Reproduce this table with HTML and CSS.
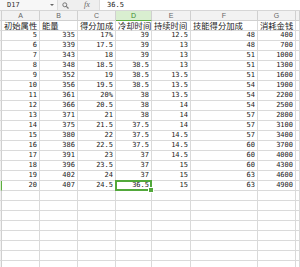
FILE: index.html
```html
<!DOCTYPE html>
<html>
<head>
<meta charset="utf-8">
<link rel="stylesheet" href="styles.css">
</head>
<body>
<div class="fbar">
  <div class="namebox"><span class="ref">D17</span><span class="caret"></span></div>
  <div class="tools">
    <svg class="mag" width="7" height="7" viewBox="0 0 7 7"><circle cx="2.8" cy="2.8" r="2" fill="none" stroke="#777" stroke-width="1"/><path d="M4.3 4.3 L6.5 6.5" stroke="#777" stroke-width="1.2"/></svg>
    <span class="fx">fx</span>
  </div>
  <div class="input">36.5</div>
</div>
<div class="sheet">
  <div class="rh ch"></div><div class="ch">A</div><div class="ch">B</div><div class="ch">C</div><div class="ch act">D</div><div class="ch">E</div><div class="ch">F</div><div class="ch">G</div><div class="ch"></div>
  <div class="rh"></div><div class="t">初始属性</div><div class="t">能量</div><div class="t">得分加成</div><div class="t">冷却时间</div><div class="t">持续时间</div><div class="t">技能得分加成</div><div class="t">消耗金钱</div><div></div>
  <div class="rh"></div><div class="n">5</div><div class="n">335</div><div class="n">17%</div><div class="n">39</div><div class="n">12.5</div><div class="n">48</div><div class="n">400</div><div></div>
  <div class="rh"></div><div class="n">6</div><div class="n">339</div><div class="n">17.5</div><div class="n">39</div><div class="n">13</div><div class="n">48</div><div class="n">700</div><div></div>
  <div class="rh"></div><div class="n">7</div><div class="n">343</div><div class="n">18</div><div class="n">39</div><div class="n">13</div><div class="n">51</div><div class="n">1000</div><div></div>
  <div class="rh"></div><div class="n">8</div><div class="n">348</div><div class="n">18.5</div><div class="n">38.5</div><div class="n">13</div><div class="n">51</div><div class="n">1300</div><div></div>
  <div class="rh"></div><div class="n">9</div><div class="n">352</div><div class="n">19</div><div class="n">38.5</div><div class="n">13.5</div><div class="n">51</div><div class="n">1600</div><div></div>
  <div class="rh"></div><div class="n">10</div><div class="n">356</div><div class="n">19.5</div><div class="n">38.5</div><div class="n">13.5</div><div class="n">54</div><div class="n">1900</div><div></div>
  <div class="rh"></div><div class="n">11</div><div class="n">361</div><div class="n">20%</div><div class="n">38</div><div class="n">13.5</div><div class="n">54</div><div class="n">2200</div><div></div>
  <div class="rh"></div><div class="n">12</div><div class="n">366</div><div class="n">20.5</div><div class="n">38</div><div class="n">14</div><div class="n">54</div><div class="n">2500</div><div></div>
  <div class="rh"></div><div class="n">13</div><div class="n">371</div><div class="n">21</div><div class="n">38</div><div class="n">14</div><div class="n">57</div><div class="n">2800</div><div></div>
  <div class="rh"></div><div class="n">14</div><div class="n">375</div><div class="n">21.5</div><div class="n">37.5</div><div class="n">14</div><div class="n">57</div><div class="n">3100</div><div></div>
  <div class="rh"></div><div class="n">15</div><div class="n">380</div><div class="n">22</div><div class="n">37.5</div><div class="n">14.5</div><div class="n">57</div><div class="n">3400</div><div></div>
  <div class="rh"></div><div class="n">16</div><div class="n">386</div><div class="n">22.5</div><div class="n">37.5</div><div class="n">14.5</div><div class="n">60</div><div class="n">3700</div><div></div>
  <div class="rh"></div><div class="n">17</div><div class="n">391</div><div class="n">23</div><div class="n">37</div><div class="n">14.5</div><div class="n">60</div><div class="n">4000</div><div></div>
  <div class="rh"></div><div class="n">18</div><div class="n">396</div><div class="n">23.5</div><div class="n">37</div><div class="n">15</div><div class="n">60</div><div class="n">4300</div><div></div>
  <div class="rh"></div><div class="n">19</div><div class="n">402</div><div class="n">24</div><div class="n">37</div><div class="n">15</div><div class="n">63</div><div class="n">4600</div><div></div>
  <div class="rh sel-row"></div><div class="n">20</div><div class="n">407</div><div class="n">24.5</div><div class="n sel">36.5</div><div class="n">15</div><div class="n">63</div><div class="n">4900</div><div></div>
  <div class="rh"></div><div></div><div></div><div></div><div></div><div></div><div></div><div></div><div></div>
  <div class="rh"></div><div></div><div></div><div></div><div></div><div></div><div></div><div></div><div></div>
  <div class="rh"></div><div></div><div></div><div></div><div></div><div></div><div></div><div></div><div></div>
  <div class="rh"></div><div></div><div></div><div></div><div></div><div></div><div></div><div></div><div></div>
  <div class="rh"></div><div></div><div></div><div></div><div></div><div></div><div></div><div></div><div></div>
  <div class="rh"></div><div></div><div></div><div></div><div></div><div></div><div></div><div></div><div></div>
  <div class="rh"></div><div></div><div></div><div></div><div></div><div></div><div></div><div></div><div></div>
  <div class="rh"></div><div></div><div></div><div></div><div></div><div></div><div></div><div></div><div></div>
</div>
</body>
</html>
```

FILE: styles.css
```css
* { box-sizing: border-box; }
html, body { margin: 0; padding: 0; background: #fff; overflow: hidden; }
body { width: 300px; height: 267px; font-family: "Noto Sans CJK SC", sans-serif; color: #222; }

.fbar {
  height: 11px;
  display: flex;
  border-bottom: 1px solid #d6d6d6;
  background: #fff;
}
.namebox {
  width: 58px;
  display: flex;
  align-items: center;
  justify-content: space-between;
  padding: 0 3px 0 7px;
  background: #f7f7f7;
  border-right: 1px solid #dcdcdc;
}
.ref { font-family: "DejaVu Sans Mono", monospace; font-size: 7px; line-height: 10px; color: #333; }
.caret {
  width: 0; height: 0;
  border-left: 2px solid transparent;
  border-right: 2px solid transparent;
  border-top: 2px solid #666;
}
.tools {
  width: 42px;
  display: flex;
  align-items: center;
  padding-left: 4px;
  gap: 15px;
  background: #efefef;
  border-right: 1px solid #dcdcdc;
}
.fx { font-family: "Liberation Serif", serif; font-style: italic; font-size: 8px; color: #666; line-height: 10px; }
.input {
  flex: 1;
  padding-left: 7px;
  font-family: "DejaVu Sans Mono", monospace;
  font-size: 7px;
  line-height: 10px;
  color: #222;
}

.sheet {
  display: grid;
  grid-template-columns: 2px 38px 38px 38px 36px 39px 67px 38px 1fr;
  grid-auto-rows: 10px;
}
.sheet > div {
  border-right: 1px solid #dadada;
  border-bottom: 1px solid #dadada;
  white-space: nowrap;
  overflow: hidden;
  line-height: 9px;
}
.sheet > .rh { background: #f2f2f2; border-right-color: #cfcfcf; }
.sheet > .sel-row { border-right: 1px solid #5cae3f; background: #dcefd3; }
.sheet > .ch {
  background: #f2f2f2;
  color: #666;
  text-align: center;
  font-family: "Liberation Sans", sans-serif;
  font-size: 7px;
  border-color: #d0d0d0;
}
.sheet > .ch.act { background: #d9eed0; color: #3d8a2c; border-bottom: 1px solid #5cae3f; }
.sheet > .t { font-size: 8.3px; padding-left: 2px; color: #222; overflow: visible; line-height: 9px; }
.sheet > .n {
  text-align: right;
  padding-right: 2px;
  font-family: "DejaVu Sans Mono", monospace;
  font-size: 7px;
  color: #1a1a1a;
}
.sheet > .sel { position: relative; overflow: visible; }
.sel::after {
  content: "";
  position: absolute;
  left: -1px; top: -1px; right: -1px; bottom: -1px;
  border: 2px solid #52a83b;
}
.sel::before {
  content: "";
  position: absolute;
  right: -3px; bottom: -3px;
  width: 4px; height: 4px;
  background: #52a83b;
  border: 1px solid #fff;
  z-index: 2;
}
```
